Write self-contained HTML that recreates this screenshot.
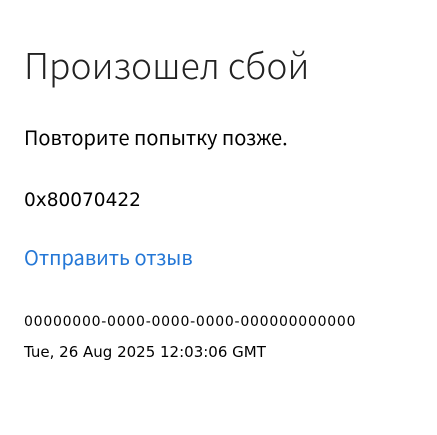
<!DOCTYPE html>
<html><head><meta charset="utf-8"><style>
body{margin:0;width:437px;height:435px;background:#fff;font-family:"DejaVu Sans",sans-serif;color:#000;position:relative;overflow:hidden}
div{position:absolute;left:24px;white-space:nowrap;line-height:1}
.cy{font-family:"Noto Sans CJK SC","Noto Sans CJK JP",sans-serif}
.t{top:47px;font-size:35.5px;font-weight:300;color:#222}
.s{top:127px;font-size:20px}
.c{top:192px;font-size:18.5px}
.l{top:247px;font-size:20px;color:#2477d6}
.g{top:315px;font-size:14px;letter-spacing:0.75px}
.d{top:345px;font-size:15px}
</style></head><body>
<div class="t cy">Произошел сбой</div>
<div class="s cy">Повторите попытку позже.</div>
<div class="c">0x80070422</div>
<div class="l cy">Отправить отзыв</div>
<div class="g">00000000-0000-0000-0000-000000000000</div>
<div class="d">Tue, 26 Aug 2025 12:03:06 GMT</div>
</body></html>
